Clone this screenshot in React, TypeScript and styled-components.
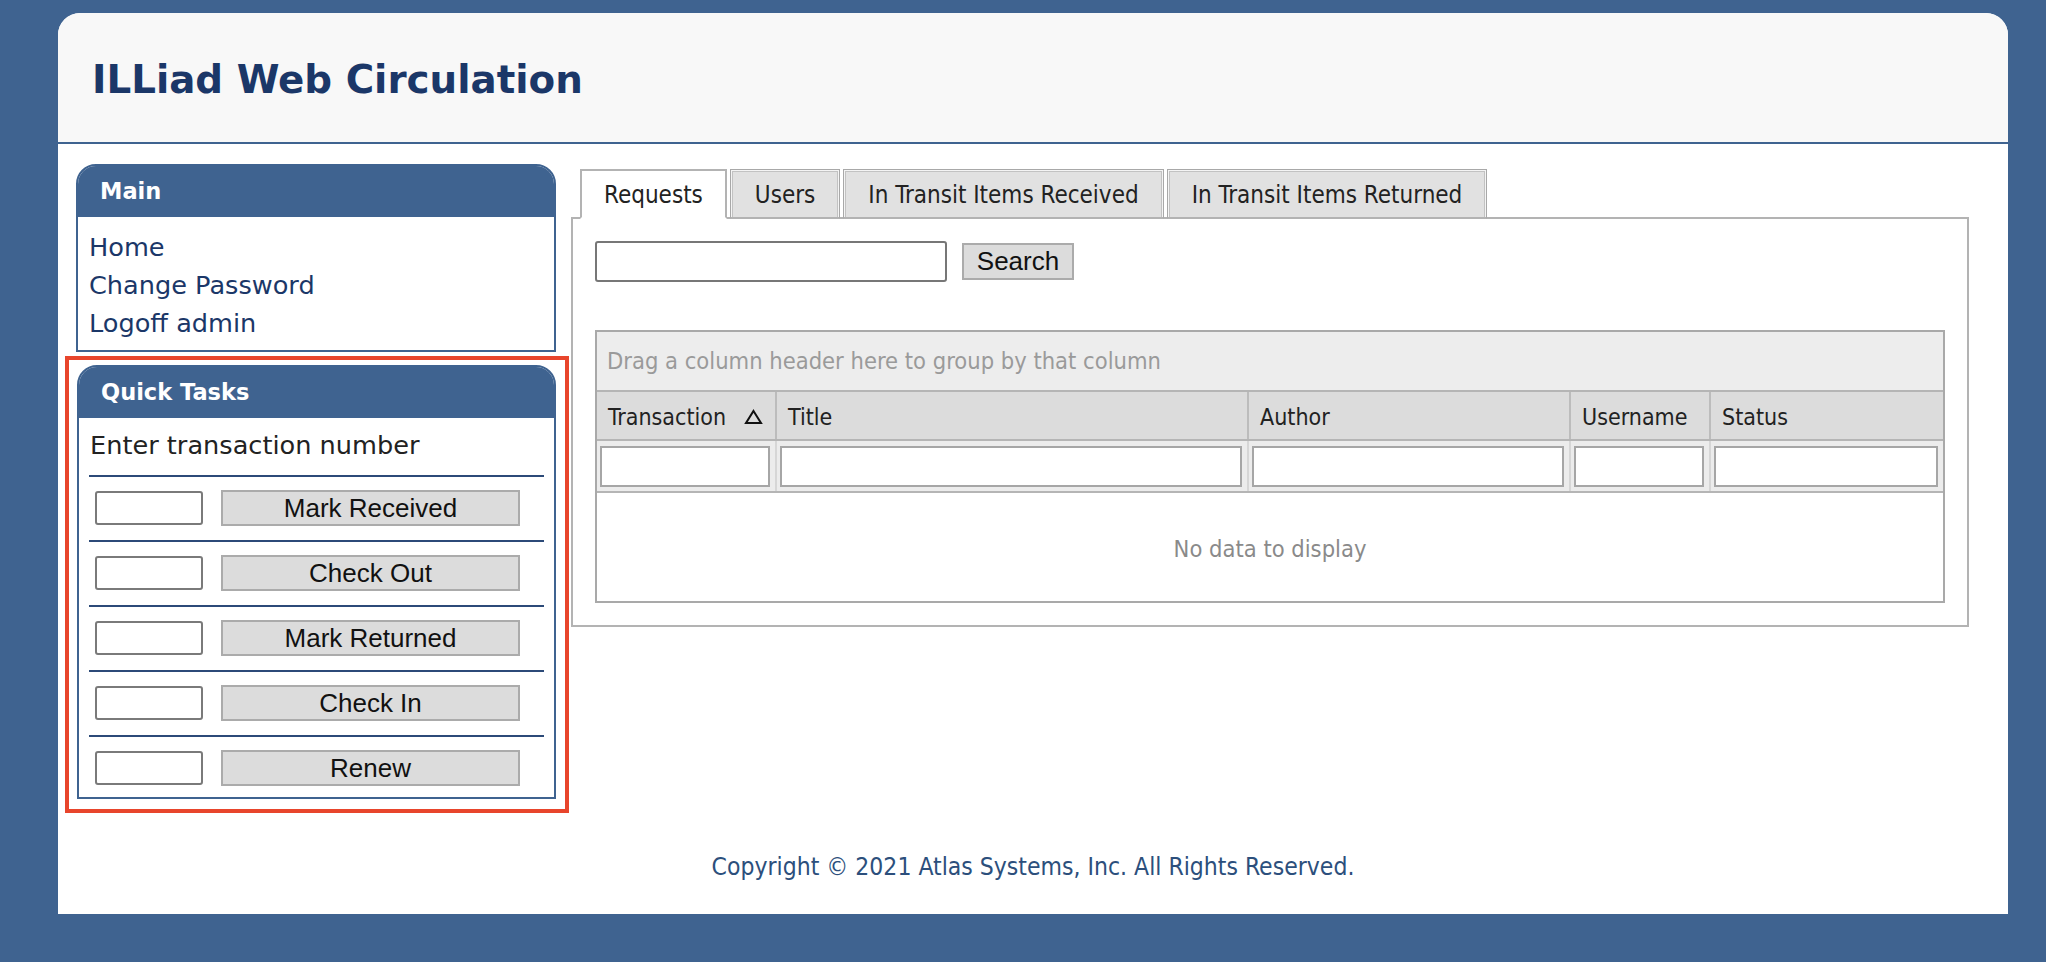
import React from 'react';
import styled, { createGlobalStyle } from 'styled-components';

const narrow = `"DejaVu Sans Condensed", "DejaVu Sans", Verdana, sans-serif`;
const verdana = `"DejaVu Sans", Verdana, sans-serif`;
const arial = `"Liberation Sans", Arial, sans-serif`;

const GlobalStyle = createGlobalStyle`
  html, body { margin: 0; padding: 0; background: #3f6390; }
  body { font-family: ${verdana}; }
  * { box-sizing: border-box; }
`;

const Page = styled.div`
  padding: 13px 38px 48px 58px;
`;

const Card = styled.div`
  background: #fff;
  border-radius: 22px 22px 0 0;
  height: 901px;
  display: flex;
  flex-direction: column;
  overflow: hidden;
`;

const Header = styled.header`
  height: 131px;
  background: #f8f8f8;
  border-bottom: 2px solid #3f6390;
  display: flex;
  align-items: center;
  padding: 3px 0 0 34px;
`;

const Title = styled.h1`
  margin: 0;
  font-family: ${verdana};
  font-weight: bold;
  font-size: 38.8px;
  color: #1b3768;
`;

const Content = styled.div`
  display: flex;
  align-items: flex-start;
  gap: 15px;
  padding: 20px 0 0 18px;
`;

const Sidebar = styled.aside`
  width: 480px;
  display: flex;
  flex-direction: column;
`;

const Box = styled.section`
  border: 2px solid #3f6390;
  border-radius: 20px 20px 0 0;
  background: #fff;
  overflow: hidden;
`;

const BoxTitle = styled.div`
  height: 51px;
  line-height: 51px;
  background: #3f6390;
  color: #fff;
  font-family: ${verdana};
  font-weight: bold;
  font-size: 22.5px;
  padding-left: 22px;
`;

const MenuBody = styled.nav`
  padding: 11px 10px 8px 10px;
`;

const MenuLink = styled.a`
  display: block;
  line-height: 38px;
  font-size: 25.6px;
  color: #1b3768;
  text-decoration: none;
  font-family: ${verdana};
  padding-left: 1px;
`;

const Highlight = styled.div`
  margin: 4px -13px 0 -11px;
  border: 4px solid #e8452c;
  padding: 5px 9px 10px 8px;
`;

const TaskBody = styled.div`
  padding: 8px 10px 11px 10px;
`;

const Prompt = styled.div`
  line-height: 38px;
  font-size: 25.6px;
  color: #222;
  margin-bottom: 11px;
  padding-left: 1px;
`;

const TaskRow = styled.div`
  display: flex;
  align-items: center;
  gap: 18px;
  border-top: 2px solid #2c4a78;
  padding: 13px 0 14px 6px;
  &:last-child { padding-bottom: 0; }
`;

const SmallInput = styled.input`
  width: 108px;
  height: 34px;
  border: 2px solid #7a7a7a;
  border-radius: 3px;
  background: #fff;
`;

const GrayButton = styled.button<{ $w: number; $h: number }>`
  width: ${p => p.$w}px;
  height: ${p => p.$h}px;
  background: #dcdcdc;
  border: 2px solid #ababab;
  font-family: ${arial};
  font-size: 26px;
  color: #111;
  padding: 0;
  cursor: pointer;
`;

const TabArea = styled.div`
  margin-top: 5px;
  width: 1398px;
`;

const TabStrip = styled.div`
  display: flex;
  gap: 3px;
  padding-left: 9px;
  margin-bottom: -2px;
  position: relative;
  z-index: 1;
`;

const Tab = styled.div<{ $active?: boolean }>`
  height: 50px;
  padding: 2px ${p => (p.$active ? 22 : 24)}px 0;
  display: flex;
  align-items: center;
  font-family: ${narrow};
  font-size: 24px;
  color: #222;
  background: ${p => (p.$active ? '#fff' : '#e1e1e1')};
  border: ${p => (p.$active ? '2px solid #b3b3b3' : '1px solid #a8a8a8')};
  border-bottom: ${p => (p.$active ? '2px solid #fff' : '2px solid #b3b3b3')};
  box-shadow: ${p => (p.$active ? 'none' : 'inset 1px 1px 0 #f4f4f4, inset -1px 0 0 #f4f4f4, inset 2px 2px 0 #c2c2c2, inset -2px 0 0 #c2c2c2')};
`;

const TabPanel = styled.div`
  border: 2px solid #b3b3b3;
  padding: 22px;
  background: #fff;
`;

const SearchRow = styled.div`
  display: flex;
  align-items: center;
  gap: 15px;
`;

const SearchInput = styled.input`
  width: 352px;
  height: 41px;
  border: 2px solid #777;
  border-radius: 3px;
`;

const Grid = styled.div`
  margin-top: 48px;
  border: 2px solid #a9a9a9;
`;

const GroupPanel = styled.div`
  height: 60px;
  background: #ededed;
  border-bottom: 2px solid #b5b5b5;
  padding-left: 10px;
  display: flex;
  align-items: center;
  font-family: ${narrow};
  font-size: 23.5px;
  color: #9a9a9a;
`;

const GridRow = styled.div<{ $h: number; $bg: string }>`
  display: grid;
  grid-template-columns: 180px 472px 322px 140px 1fr;
  height: ${p => p.$h}px;
  background: ${p => p.$bg};
  border-bottom: 2px solid #b5b5b5;
`;

const HeadCell = styled.div`
  display: flex;
  align-items: center;
  justify-content: space-between;
  padding: 3px 12px 0 11px;
  border-right: 2px solid #bcbcbc;
  font-family: ${narrow};
  font-size: 23px;
  color: #222;
  &:last-child { border-right: none; }
`;

const FilterCell = styled.div`
  padding: 5px 5px 4px 3px;
  border-right: 2px solid #d6d6d6;
  &:last-child { border-right: none; }
`;

const FilterInput = styled.input`
  width: 100%;
  height: 100%;
  border: 2px solid #a6a6a6;
  background: #fff;
`;

const EmptyRow = styled.div`
  height: 108px;
  padding-top: 3px;
  display: flex;
  align-items: center;
  justify-content: center;
  font-family: ${narrow};
  font-size: 23.5px;
  color: #8a8a8a;
`;

const Footer = styled.footer`
  margin-top: 39px;
  text-align: center;
  line-height: 30px;
  font-family: ${narrow};
  font-size: 24.5px;
  color: #2c4f7c;
`;

const SortUp = () => (
  <svg width="19" height="16" viewBox="0 0 19 16">
    <path d="M9.5 2 L17 14 L2 14 Z" fill="none" stroke="#111" strokeWidth="2" strokeLinejoin="miter" />
  </svg>
);

const tasks = ['Mark Received', 'Check Out', 'Mark Returned', 'Check In', 'Renew'];
const columns = ['Transaction', 'Title', 'Author', 'Username', 'Status'];
const tabs = ['Requests', 'Users', 'In Transit Items Received', 'In Transit Items Returned'];

export default function App() {
  return (
    <>
      <GlobalStyle />
      <Page>
        <Card>
          <Header>
            <Title>ILLiad Web Circulation</Title>
          </Header>
          <Content>
            <Sidebar>
              <Box>
                <BoxTitle>Main</BoxTitle>
                <MenuBody>
                  <MenuLink href="#">Home</MenuLink>
                  <MenuLink href="#">Change Password</MenuLink>
                  <MenuLink href="#">Logoff admin</MenuLink>
                </MenuBody>
              </Box>
              <Highlight>
                <Box>
                  <BoxTitle>Quick Tasks</BoxTitle>
                  <TaskBody>
                    <Prompt>Enter transaction number</Prompt>
                    {tasks.map(t => (
                      <TaskRow key={t}>
                        <SmallInput type="text" />
                        <GrayButton $w={299} $h={36}>{t}</GrayButton>
                      </TaskRow>
                    ))}
                  </TaskBody>
                </Box>
              </Highlight>
            </Sidebar>
            <TabArea>
              <TabStrip>
                {tabs.map((t, i) => (
                  <Tab key={t} $active={i === 0}>{t}</Tab>
                ))}
              </TabStrip>
              <TabPanel>
                <SearchRow>
                  <SearchInput type="text" />
                  <GrayButton $w={112} $h={37}>Search</GrayButton>
                </SearchRow>
                <Grid>
                  <GroupPanel>Drag a column header here to group by that column</GroupPanel>
                  <GridRow $h={49} $bg="#dcdcdc">
                    {columns.map((c, i) => (
                      <HeadCell key={c}>
                        <span>{c}</span>
                        {i === 0 && <SortUp />}
                      </HeadCell>
                    ))}
                  </GridRow>
                  <GridRow $h={52} $bg="#ececec">
                    {columns.map(c => (
                      <FilterCell key={c}>
                        <FilterInput type="text" />
                      </FilterCell>
                    ))}
                  </GridRow>
                  <EmptyRow>No data to display</EmptyRow>
                </Grid>
              </TabPanel>
            </TabArea>
          </Content>
          <Footer>Copyright © 2021 Atlas Systems, Inc. All Rights Reserved.</Footer>
        </Card>
      </Page>
    </>
  );
}
